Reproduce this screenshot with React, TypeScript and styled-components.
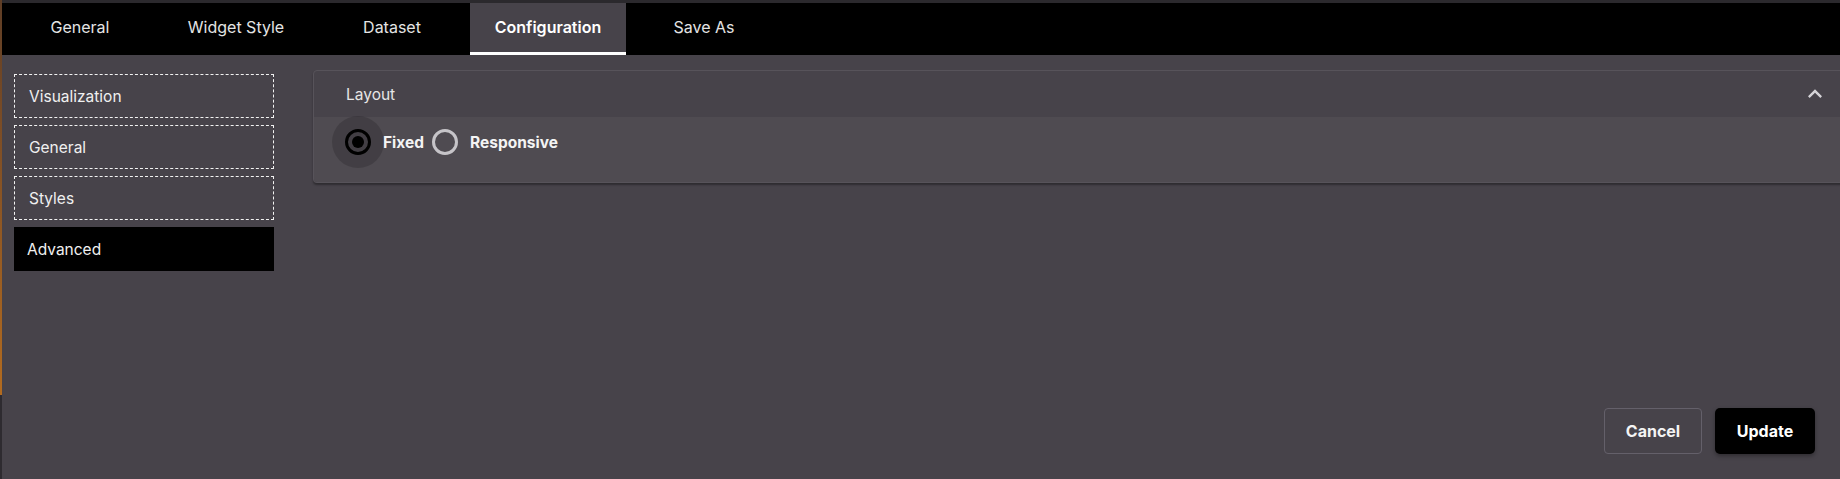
import styled, { createGlobalStyle } from 'styled-components';

const GlobalStyle = createGlobalStyle`
  html, body {
    margin: 0;
    padding: 0;
    height: 100%;
    overflow: hidden;
  }

  #root {
    height: 100%;
  }

  * {
    box-sizing: border-box;
  }
`;

const tabs = ['General', 'Widget Style', 'Dataset', 'Configuration', 'Save As'];
const sections = ['Visualization', 'General', 'Styles', 'Advanced'];

const ChevronUpIcon = () => (
  <svg width="28" height="28" viewBox="0 0 24 24" fill="#d4d2d6">
    <path d="M12 8l-6 6 1.41 1.41L12 10.83l4.59 4.58L18 14z" />
  </svg>
);

export default function App() {
  return (
    <>
      <GlobalStyle />
      <Page>
        <TopStrip />
        <TabBar>
          {tabs.map((tab) => (
            <Tab key={tab} $active={tab === 'Configuration'}>
              {tab}
            </Tab>
          ))}
        </TabBar>
        <Body>
          <Content>
            <Sidebar>
              {sections.map((section) => (
                <SideItem key={section} $active={section === 'Advanced'}>
                  {section}
                </SideItem>
              ))}
            </Sidebar>
            <Panel>
              <PanelHeader>
                <PanelTitle>Layout</PanelTitle>
                <ChevronUpIcon />
              </PanelHeader>
              <PanelBody>
                <RadioGroup>
                  <Option>
                    <Radio $checked />
                    <OptionLabel>Fixed</OptionLabel>
                  </Option>
                  <Option>
                    <Radio />
                    <OptionLabel>Responsive</OptionLabel>
                  </Option>
                </RadioGroup>
              </PanelBody>
            </Panel>
          </Content>
          <Footer>
            <CancelButton>Cancel</CancelButton>
            <UpdateButton>Update</UpdateButton>
          </Footer>
        </Body>
      </Page>
    </>
  );
}

const Page = styled.div`
  height: 100vh;

  display: flex;
  flex-direction: column;

  background: #47434a;
  border-left: 2px solid;
  border-image: linear-gradient(to bottom, #5e3d25 0, #7a4c26 120px, #b36b1f 394px, #2e2b30 394px) 1;

  font-family: Inter, 'Noto Sans', sans-serif;
  color: #ececec;
`;

const TopStrip = styled.div`
  height: 3px;
  background: #2b292d;
`;

const TabBar = styled.nav`
  height: 52px;

  display: flex;

  background: #000;
`;

const Tab = styled.div<{ $active?: boolean }>`
  width: 156px;

  display: flex;
  justify-content: center;
  align-items: center;

  padding-bottom: 1px;
  background: ${({ $active }) => ($active ? '#47434a' : 'transparent')};
  border-bottom: 3px solid ${({ $active }) => ($active ? '#ffffff' : 'transparent')};

  font-size: 16px;
  font-weight: ${({ $active }) => ($active ? 600 : 400)};
  color: ${({ $active }) => ($active ? '#ffffff' : '#e4e4e4')};
`;

const Body = styled.main`
  flex: 1;

  display: flex;
  flex-direction: column;
`;

const Content = styled.div`
  flex: 1;

  display: flex;
  align-items: flex-start;

  padding-top: 15px;
`;

const Sidebar = styled.aside`
  width: 260px;

  display: flex;
  flex-direction: column;
  gap: 7px;

  margin: 4px 0 0 12px;
`;

const SideItem = styled.div<{ $active?: boolean }>`
  height: 44px;

  display: flex;
  align-items: center;

  padding: 0 ${({ $active }) => ($active ? '13px' : '14px')};
  background: ${({ $active }) => ($active ? '#000' : 'transparent')};
  border: ${({ $active }) => ($active ? 'none' : '1px dashed #f2f2f2')};

  font-size: 15.5px;
  color: #f0f0f0;
`;

const Panel = styled.section`
  flex: 1;

  margin: 0 -6px 0 39px;

  border: 1px solid #57535a;
  border-radius: 4px;
  overflow: hidden;
  box-shadow: 0 2px 2px rgba(0, 0, 0, 0.35);
`;

const PanelHeader = styled.div`
  height: 46px;

  display: flex;
  justify-content: space-between;
  align-items: center;

  padding: 0 16px 0 32px;
`;

const PanelTitle = styled.span`
  font-size: 15.5px;
  color: #e6e6e6;
`;

const PanelBody = styled.div`
  padding: 12px 31px 27px;
  background: #4f4b51;
`;

const RadioGroup = styled.div`
  display: flex;
  align-items: center;
  gap: 8px;
`;

const Option = styled.label`
  display: flex;
  align-items: center;
  gap: 12px;
`;

const Radio = styled.span<{ $checked?: boolean }>`
  position: relative;
  width: 26px;
  height: 26px;

  display: flex;
  justify-content: center;
  align-items: center;

  border: 3px solid ${({ $checked }) => ($checked ? '#000' : '#c6c4c8')};
  border-radius: 50%;

  &::before {
    content: '';
    position: absolute;
    left: 50%;
    top: 50%;
    width: 52px;
    height: 52px;
    transform: translate(-50%, -50%);
    border-radius: 50%;
    background: ${({ $checked }) => ($checked ? 'rgba(0, 0, 0, 0.16)' : 'transparent')};
  }

  &::after {
    content: '';
    width: 12px;
    height: 12px;
    border-radius: 50%;
    background: ${({ $checked }) => ($checked ? '#000' : 'transparent')};
  }
`;

const OptionLabel = styled.span`
  font-size: 15.5px;
  font-weight: 700;
  color: #f4f4f4;
`;

const Footer = styled.footer`
  display: flex;
  justify-content: flex-end;
  gap: 13px;

  padding: 0 25px 25px 0;
`;

const CancelButton = styled.button`
  width: 98px;
  height: 46px;

  background: transparent;
  border: 1px solid #64606a;
  border-radius: 4px;

  font-family: Inter, 'Noto Sans', sans-serif;
  font-size: 16px;
  font-weight: 700;
  color: #f4f4f4;
`;

const UpdateButton = styled.button`
  width: 100px;
  height: 46px;

  background: #000;
  border: none;
  border-radius: 5px;
  box-shadow: 0 2px 4px rgba(0, 0, 0, 0.35);

  font-family: Inter, 'Noto Sans', sans-serif;
  font-size: 16px;
  font-weight: 700;
  color: #ffffff;
`;
